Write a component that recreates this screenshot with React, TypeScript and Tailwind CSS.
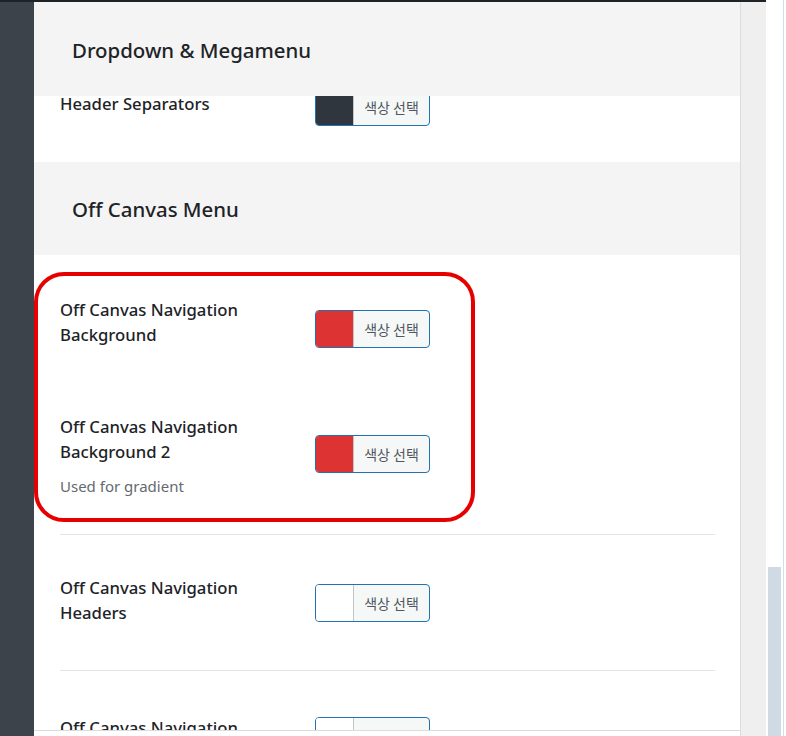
import React from 'react';

const font = { fontFamily: '"Noto Sans", "Liberation Sans", sans-serif' };

const ColorButton = ({ color, className = '' }: { color: string; className?: string }) => (
  <button
    className={`flex h-[38px] w-[115px] shrink-0 items-stretch overflow-hidden rounded-[4px] border border-[#2271b1] bg-[#f6f7f7] p-0 ${className}`}
  >
    <span className="w-[38px] border-r border-[#c3c4c7]" style={{ backgroundColor: color }} />
    <span
      className="flex flex-1 items-center justify-center text-[14px] text-[#50575e]"
      style={{ fontFamily: '"Noto Sans CJK KR", "Noto Sans", sans-serif' }}
    >
      색상 선택
    </span>
  </button>
);

const SectionHeader = ({ title, className = '' }: { title: string; className?: string }) => (
  <div className={`flex shrink-0 items-center bg-[#f4f4f4] pl-[38px] ${className}`}>
    <h3 className="pt-[2px] text-[20.4px] font-medium text-[#1d2327]">{title}</h3>
  </div>
);

const Label = ({ lines }: { lines: string[] }) => (
  <div className="w-[255px] shrink-0 text-[16.7px] font-medium leading-[25px] text-[#1d2327]">
    {lines.map((l, i) => (
      <div key={i}>{l}</div>
    ))}
  </div>
);

export default function App() {
  return (
    <div className="flex h-[736px] w-[786px] overflow-hidden bg-white" style={font}>
      <div className="flex w-[766px] flex-col">
        <div className="h-[2px] shrink-0 bg-[#1d2327]" />
        <div className="flex min-h-0 flex-1">
          <div className="w-[34px] shrink-0 bg-[#3c434a]" />

          <div className="relative flex w-[706px] shrink-0 flex-col">
            <div className="flex min-h-0 flex-1 flex-col overflow-hidden">
              <SectionHeader title="Dropdown & Megamenu" className="relative z-10 h-[94px]" />

              <div className="flex h-[66px] shrink-0 items-start pl-[26px]">
                <div className="-mt-[5px]">
                  <Label lines={['Header Separators']} />
                </div>
                <ColorButton color="#2f363d" className="-mt-[8px]" />
              </div>

              <SectionHeader title="Off Canvas Menu" className="h-[93px]" />

              <div className="flex shrink-0 items-start pb-[40px] pl-[26px] pt-[42px]">
                <Label lines={['Off Canvas Navigation', 'Background']} />
                <ColorButton color="#dd3333" className="mt-[13px]" />
              </div>

              <div className="flex shrink-0 items-start pb-[38px] pl-[26px] pt-[26px]">
                <div className="flex w-[255px] shrink-0 flex-col">
                  <Label lines={['Off Canvas Navigation', 'Background 2']} />
                  <p className="mt-[12px] text-[15px] leading-[20px] text-[#646970]">Used for gradient</p>
                </div>
                <ColorButton color="#dd3333" className="mt-[21px]" />
              </div>

              <div className="ml-[26px] mr-[25px] h-px shrink-0 bg-[#e2e4e7]" />

              <div className="flex shrink-0 items-start pb-[45px] pl-[26px] pt-[40px]">
                <Label lines={['Off Canvas Navigation', 'Headers']} />
                <ColorButton color="#ffffff" className="mt-[9px]" />
              </div>

              <div className="ml-[26px] mr-[25px] h-px shrink-0 bg-[#e2e4e7]" />

              <div className="flex shrink-0 items-start pb-[40px] pl-[26px] pt-[44px]">
                <Label lines={['Off Canvas Navigation', 'Text']} />
                <ColorButton color="#ffffff" className="mt-[2px]" />
              </div>
            </div>
            <div className="h-[6px] shrink-0 border-t border-[#dcdcde] bg-white" />

            {/* highlight annotation */}
            <div className="pointer-events-none absolute left-0 top-[270px] h-[250px] w-[441px] rounded-[30px] border-[4px] border-[#e60000]" />
          </div>

          <div className="w-[26px] shrink-0 border-l border-[#dcdcde] bg-[#efefef]" />
        </div>
      </div>

      <div className="flex w-[20px] shrink-0 bg-white">
        <div className="ml-[2px] flex w-[13px] flex-col">
          <div className="h-[567px] shrink-0" />
          <div className="flex-1 bg-[#cfdae4]" />
        </div>
        <div className="ml-[2px] w-px bg-[#d3dde7]" />
      </div>
    </div>
  );
}
